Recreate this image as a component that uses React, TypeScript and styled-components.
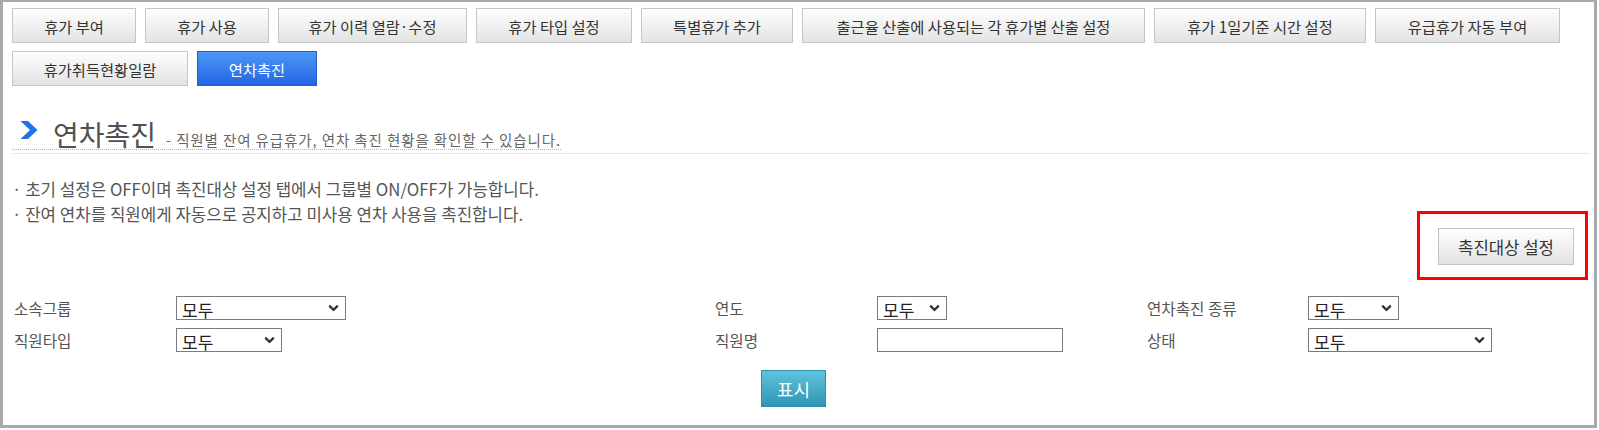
import React from 'react';
import styled, {createGlobalStyle} from 'styled-components';

const GlobalStyle = createGlobalStyle`
  html, body {
    margin: 0;
    padding: 0;
    background: #fff;
  }
  body {
    font-family: "Noto Sans CJK KR", "Noto Sans", sans-serif;
    color: #555;
  }
`;

const FONT = `"Noto Sans CJK KR", "Noto Sans", sans-serif`;

const tabs = [
  {label: '휴가 부여', w: 124},
  {label: '휴가 사용', w: 124},
  {label: '휴가 이력 열람·수정', w: 189},
  {label: '휴가 타입 설정', w: 156},
  {label: '특별휴가 추가', w: 152},
  {label: '출근율 산출에 사용되는 각 휴가별 산출 설정', w: 343},
  {label: '휴가 1일기준 시간 설정', w: 212},
  {label: '유급휴가 자동 부여', w: 185},
  {label: '휴가취득현황일람', w: 176},
  {label: '연차촉진', w: 120, active: true},
];

const notes = [
  '· 초기 설정은 OFF이며 촉진대상 설정 탭에서 그룹별 ON/OFF가 가능합니다.',
  '· 잔여 연차를 직원에게 자동으로 공지하고 미사용 연차 사용을 촉진합니다.',
];

const Caret = () => (
  <CaretIcon width="11" height="7" viewBox="0 0 11 7">
    <path d="M1.2 1.2 L5.5 5.3 L9.8 1.2" fill="none" stroke="#3d3122" strokeWidth="2.3" />
  </CaretIcon>
);

const SelectBox: React.FC<{w: number}> = ({w}) => (
  <SelectWrap $w={w}>
    <Select defaultValue="all">
      <option value="all">모두</option>
    </Select>
    <Caret />
  </SelectWrap>
);

const App: React.FC = () => {
  return (
    <>
      <GlobalStyle />
      <Frame>
        <TabBar>
          {tabs.map((t) => (
            <TabButton key={t.label} $w={t.w} $active={!!t.active}>
              {t.label}
            </TabButton>
          ))}
        </TabBar>

        <TitleSection>
          <Heading>
            <Chevron width="18" height="18" viewBox="0 0 18 18">
              <polygon points="0.5,0 8,0 17.5,9 8,18 0.5,18 10,9" fill="#1f72ea" />
            </Chevron>
            <Title>연차촉진</Title>
            <SubTitle>- 직원별 잔여 유급휴가, 연차 촉진 현황을 확인할 수 있습니다.</SubTitle>
          </Heading>
        </TitleSection>

        <Notes>
          {notes.map((n) => (
            <li key={n}>{n}</li>
          ))}
        </Notes>

        <ActionRow>
          <Highlighted>
            <PlainButton>촉진대상 설정</PlainButton>
          </Highlighted>
        </ActionRow>

        <FilterGrid>
          <Label>소속그룹</Label>
          <div>
            <SelectBox w={170} />
          </div>
          <Label>연도</Label>
          <div>
            <SelectBox w={70} />
          </div>
          <Label>연차촉진 종류</Label>
          <div>
            <SelectBox w={91} />
          </div>

          <Label>직원타입</Label>
          <div>
            <SelectBox w={106} />
          </div>
          <Label>직원명</Label>
          <div>
            <TextInput />
          </div>
          <Label>상태</Label>
          <div>
            <SelectBox w={184} />
          </div>
        </FilterGrid>

        <SubmitRow>
          <ShowButton>표시</ShowButton>
        </SubmitRow>
      </Frame>
    </>
  );
};

const Frame = styled.div`
  box-sizing: border-box;
  width: 1597px;
  border: 3px solid #a9a9a9;
  border-top-width: 2px;
  padding: 6px 5px 18px 9px;
`;

const TabBar = styled.div`
  display: flex;
  flex-wrap: wrap;
  column-gap: 9px;
  row-gap: 8px;
`;

const TabButton = styled.button<{$w: number; $active: boolean}>`
  box-sizing: border-box;
  width: ${(p) => p.$w}px;
  height: 35px;
  padding: 0;
  font-family: ${FONT};
  font-size: 15.3px;
  color: ${(p) => (p.$active ? '#fff' : '#333')};
  border: 1px solid ${(p) => (p.$active ? '#245fcc' : '#c6c6c6')};
  background: ${(p) =>
    p.$active
      ? 'linear-gradient(#4d97f7, #2465e5)'
      : 'linear-gradient(#fefefe, #e3e3e3)'};
  cursor: pointer;
`;

const TitleSection = styled.div`
  margin-top: 34px;
  padding-bottom: 3px;
  border-bottom: 1px dotted #cfcfcf;
`;

const Heading = styled.div`
  display: flex;
  width: max-content;
  align-items: baseline;
  box-sizing: content-box;
  height: 29px;
  padding-left: 8px;
  border-bottom: 1px dotted #b3b3b3;
`;

const Chevron = styled.svg`
  flex: none;
  align-self: flex-start;
  margin-top: 1px;
`;

const Title = styled.h2`
  margin: 0 0 0 15px;
  font-size: 28px;
  line-height: 28px;
  font-weight: 400;
  color: #505050;
`;

const SubTitle = styled.span`
  margin-left: 10px;
  font-size: 14.5px;
  letter-spacing: 0.9px;
  line-height: 20px;
  color: #666;
`;

const Notes = styled.ul`
  list-style: none;
  margin: 23px 0 0;
  padding: 0;
  font-size: 16.8px;
  line-height: 25px;
  color: #555;
`;

const ActionRow = styled.div`
  display: flex;
  justify-content: flex-end;
  padding-right: 15px;
  margin-top: 1px;
`;

const Highlighted = styled.div`
  position: relative;
  display: flex;

  &::after {
    content: '';
    position: absolute;
    inset: -17px -14px -15px -21px;
    border: 3px solid #ff0000;
    pointer-events: none;
  }
`;

const PlainButton = styled.button`
  box-sizing: border-box;
  width: 136px;
  height: 37px;
  padding: 0;
  font-family: ${FONT};
  font-size: 16.7px;
  color: #333;
  border: 1px solid #c3c3c3;
  background: linear-gradient(#fefefe, #e2e2e2);
`;

const FilterGrid = styled.div`
  display: grid;
  grid-template-columns: 164px 537px 164px 268px 163px 1fr;
  grid-auto-rows: 24px;
  row-gap: 8px;
  align-items: center;
  margin-top: 31px;
`;

const Label = styled.div`
  padding-left: 2px;
  font-size: 15.6px;
  line-height: 20px;
  color: #555;
`;

const SelectWrap = styled.div<{$w: number}>`
  position: relative;
  width: ${(p) => p.$w}px;
  height: 24px;
`;

const Select = styled.select`
  appearance: none;
  box-sizing: border-box;
  width: 100%;
  height: 100%;
  margin: 0;
  padding: 0 0 0 5px;
  border: 1px solid #7b7b7b;
  border-radius: 0;
  background: #fff;
  font-family: ${FONT};
  font-size: 17px;
  color: #222;
  outline: none;
`;

const CaretIcon = styled.svg`
  position: absolute;
  right: 7px;
  top: 50%;
  transform: translateY(-50%);
  pointer-events: none;
`;

const TextInput = styled.input`
  box-sizing: border-box;
  display: block;
  width: 186px;
  height: 24px;
  margin: 0;
  border: 1px solid #7b7b7b;
  border-radius: 0;
  background: #fff;
  outline: none;
`;

const SubmitRow = styled.div`
  display: flex;
  justify-content: center;
  padding-right: 14px;
  margin-top: 18px;
`;

const ShowButton = styled.button`
  box-sizing: border-box;
  width: 65px;
  height: 37px;
  padding: 0;
  font-family: ${FONT};
  font-size: 18px;
  color: #fff;
  border: 1px solid #2e8fa9;
  background: linear-gradient(#5fc3df, #2f95b2);
`;

export default App;
